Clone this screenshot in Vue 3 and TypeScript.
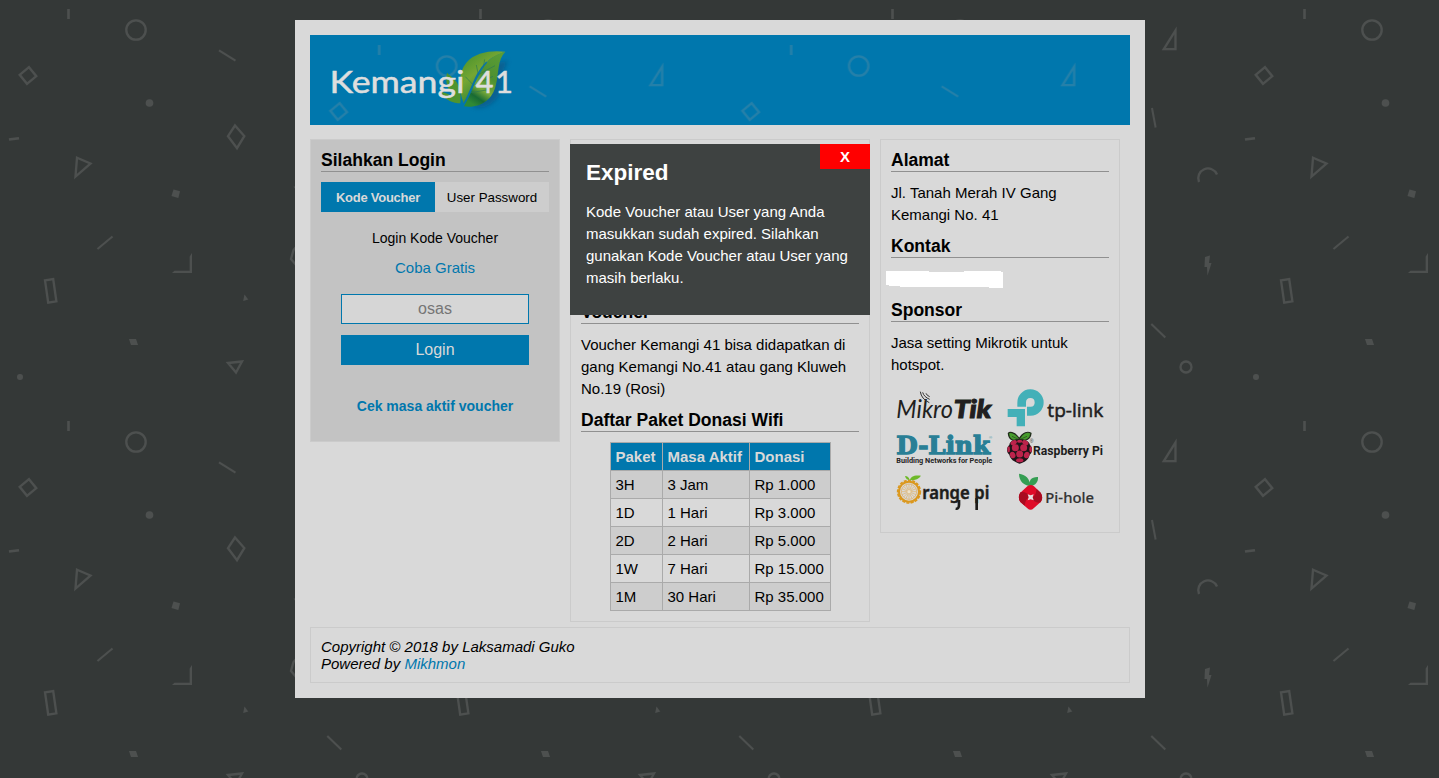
<script setup lang="ts">
import { ref } from 'vue'

interface Donation {
  code: string
  period: string
  price: string
}

const donations: Donation[] = [
  { code: '3H', period: '3 Jam', price: 'Rp 1.000' },
  { code: '1D', period: '1 Hari', price: 'Rp 3.000' },
  { code: '2D', period: '2 Hari', price: 'Rp 5.000' },
  { code: '1W', period: '7 Hari', price: 'Rp 15.000' },
  { code: '1M', period: '30 Hari', price: 'Rp 35.000' },
]

const mode = ref<'voucher' | 'user'>('voucher')
const dialogOpen = ref(true)
</script>

<template>
  <div class="page">
    <svg class="backdrop" aria-hidden="true">
      <defs>
        <g id="confetti" fill="none" stroke="#999" stroke-opacity="0.24" stroke-width="2.3">
          <path d="M68.5 9v10" stroke-width="2.6" />
          <circle cx="136" cy="30" r="9.7" />
          <path d="M219 50.3l16.5 10.4" stroke-width="2" />
          <path d="M29 67.200l7.300 9-9.300 7.600-7.300-9z" />
          <path d="M9 139.500l10-1.300" stroke-width="2.600" />
          <path d="M77 157.700l13.500 5.800-15 13z" />
          <path d="M235 125.500l9.300 10.600-7.300 12-9-12z" />
          <path d="M97.500 249l15-12.500" stroke-width="2" />
          <path d="M45 280.300l8.200-1.300 3.200 22.400-8.200 1.200z" />
          <path d="M228 363l14-1.500-6 11z" />
          <path d="M351.500 30.500v18.700h-11.700z" />
          <path d="M328 108l3.600 19.500" stroke-width="2" />
          <path d="M375 182a9.500 9.500 0 1 1 18-7.500" />
          <path d="M327.300 324l14 13.500" stroke-width="2" />
          <circle cx="362" cy="367" r="5.500" />
          <path d="M298 245l-4.500 5-2.500 9 5 6 8-3 1-11z" />
          <g fill="#999" fill-opacity="0.24" stroke="none">
            <circle cx="149.500" cy="103" r="3.800" />
            <path d="M173.500 189.500l6.500 1.800-1.700 6.700-6.800-1.900z" />
            <path d="M189.700 256.500l2.300-3.500v20h-20l2.500-2.300h15.200z" />
            <path d="M244.500 294.500l3.700 5-5 1.500z" />
            <path d="M129 339h7l2 6h-7z" />
            <circle cx="20" cy="377" r="3" />
            <path d="M381 257l5-1.500-1 7.500h2.500l-4 12.500-.5-8.500h-2.500z" />
            <path d="M293.500 186.500h5l-2 4z" />
          </g>
        </g>
        <pattern id="page-tile" width="412" height="412" patternUnits="userSpaceOnUse">
          <use href="#confetti" />
        </pattern>
      </defs>
      <rect width="100%" height="100%" fill="url(#page-tile)" />
    </svg>

    <main class="sheet">
      <header class="banner">
        <svg viewBox="0 0 820 90" width="820" height="90">
          <defs>
            <pattern id="banner-tile" x="0.7" y="1" width="412" height="412" patternUnits="userSpaceOnUse">
              <use href="#confetti" />
            </pattern>
            <linearGradient id="leaf" x1="0.15" y1="0.2" x2="0.7" y2="1">
              <stop offset="0" stop-color="#56982f" />
              <stop offset="0.3" stop-color="#74a633" />
              <stop offset="0.6" stop-color="#4b9034" />
              <stop offset="0.85" stop-color="#1b6f35" />
              <stop offset="1" stop-color="#3b9437" />
            </linearGradient>
            <linearGradient id="leaf-right" x1="0.8" y1="0" x2="0.3" y2="1">
              <stop offset="0" stop-color="#5a9c35" />
              <stop offset="0.45" stop-color="#4d9031" />
              <stop offset="0.7" stop-color="#78aa39" />
              <stop offset="0.86" stop-color="#186a33" />
              <stop offset="1" stop-color="#2f8935" />
            </linearGradient>
            <filter id="soft" x="-30%" y="-30%" width="160%" height="160%">
              <feGaussianBlur stdDeviation="6" />
            </filter>
          </defs>
          <rect width="820" height="90" fill="url(#banner-tile)" />
          <g transform="scale(0.33333) translate(-45 -45)">
            <path d="M640 122C618 155 625 200 612 225C600 255 560 270 535 262L590 130Z" fill="#075b8b" opacity="0.8" filter="url(#soft)" />
            <path d="M456 158C470 172 486 178 493 205C498 220 497 238 496 250C475 250 452 242 438 216C452 217 466 225 478 234C461 213 448 188 456 158Z" fill="#4f942f" />
            <path d="M506 250C490 207 489 158 514 128C540 96 590 90 631 95C606 104 590 112 580 122C546 155 529 210 506 250Z" fill="url(#leaf)" />
            <path d="M507 259C535 210 544 165 580 122C592 110 608 101 631 95C607 119 612 158 602 197C593 237 557 266 507 259Z" fill="url(#leaf-right)" />
            <path d="M550 164L600 137M535 196L594 169M527 218L586 208M550 164L544 135M535 195L511 170M565 142L569 118" fill="none" stroke="#2c7852" stroke-width="2" />
            <path d="M507 251C530 211 540 160 575 126" fill="none" stroke="#0a73a5" stroke-width="4" />
          </g>
          <g class="wordmark">
            <text x="19.5" y="57.8" font-size="30" textLength="135" lengthAdjust="spacingAndGlyphs">Kemangi</text>
            <text x="165.500 185" y="57.8" font-size="31">41</text>
          </g>
        </svg>
      </header>

      <div class="columns">
        <section class="box login">
          <h3>Silahkan Login</h3>
          <div class="tabs">
            <button :class="{ active: mode === 'voucher' }" @click="mode = 'voucher'">Kode Voucher</button>
            <button :class="{ active: mode === 'user' }" @click="mode = 'user'">User Password</button>
          </div>
          <form @submit.prevent>
            <p class="caption">Login Kode Voucher</p>
            <a class="trial" href="#">Coba Gratis</a>
            <input type="text" placeholder="osas" />
            <button type="submit">Login</button>
          </form>
          <a class="check" href="#">Cek masa aktif voucher</a>
        </section>

        <section class="box info">
          <h3>Voucher</h3>
          <p>Voucher Kemangi 41 bisa didapatkan di gang Kemangi No.41 atau gang Kluweh No.19 (Rosi)</p>
          <h3>Daftar Paket Donasi Wifi</h3>
          <table>
            <thead>
              <tr><th>Paket</th><th>Masa Aktif</th><th>Donasi</th></tr>
            </thead>
            <tbody>
              <tr v-for="d in donations" :key="d.code">
                <td>{{ d.code }}</td><td>{{ d.period }}</td><td>{{ d.price }}</td>
              </tr>
            </tbody>
          </table>

          <div v-if="dialogOpen" class="dialog" role="dialog">
            <button class="close" @click="dialogOpen = false">X</button>
            <h2>Expired</h2>
            <p>Kode Voucher atau User yang Anda masukkan sudah expired. Silahkan gunakan Kode Voucher atau User yang masih berlaku.</p>
          </div>
        </section>

        <section class="box contact">
          <h3>Alamat</h3>
          <p>Jl. Tanah Merah IV Gang Kemangi No. 41</p>
          <h3>Kontak</h3>
          <div class="phone">
            <svg width="117" height="17" viewBox="0 0 117 17">
              <path d="M0 0H43V1H78V0H115V1H117V17H103V16H14V15H3V14H0Z" fill="#fff" />
            </svg>
          </div>
          <h3>Sponsor</h3>
          <p>Jasa setting Mikrotik untuk hotspot.</p>
          <svg class="sponsors" width="218" height="136" viewBox="33 18 654 408">
            <!-- MikroTik -->
            <g fill="#211f20">
              <text x="49" y="113" font-family="Lato" font-weight="400" font-style="italic" font-size="77" textLength="170" lengthAdjust="spacingAndGlyphs">Mikro</text>
              <text x="221" y="113" font-family="Lato" font-weight="900" font-style="italic" font-size="74" textLength="113" lengthAdjust="spacingAndGlyphs" stroke="#211f20" stroke-width="3">Tik</text>
            </g>
            <path d="M121 35Q124 57 148 68M128 37Q132 51 149 58M138 40Q141 47 149 50" fill="none" stroke="#333" stroke-width="3" />
            <!-- tp-link -->
            <g fill="#43b0b8">
              <path d="M412 80V69A39.500 39.500 0 1 1 452 107H441V80H452A13 13 0 1 0 438 67V80Z" />
              <path d="M383 87H435V139H410V111H383Z" />
            </g>
            <text x="502" y="110" fill="#202020" stroke="#202020" stroke-width="1.500" font-family="Open Sans" font-weight="500" font-size="55" textLength="168" lengthAdjust="spacingAndGlyphs">tp-link</text>
            <!-- D-Link -->
            <text x="49" y="223" fill="#297f96" stroke="#297f96" stroke-width="4" font-family="DejaVu Serif" font-weight="700" font-size="73" textLength="281" lengthAdjust="spacingAndGlyphs">D-Link</text>
            <text x="327" y="177" fill="#4b91a2" font-family="Liberation Sans" font-size="13">®</text>
            <text x="49" y="248" fill="#252525" font-family="Roboto" font-weight="700" font-size="22.5" textLength="288" lengthAdjust="spacingAndGlyphs">Building Networks for People</text>
            <!-- Raspberry Pi -->
            <path d="M418 176C402 152 387 157 385 160C387 178 397 184 418 181C439 185 451 176 453 160C444 153 428 157 418 176Z" fill="#479c2d" stroke="#202b1b" stroke-width="3.500" />
            <path d="M418 179L396 169M418 179L441 169" stroke="#25421e" stroke-width="2" />
            <path d="M418 178C402 176 389 184 388 195C378 204 380 218 388 224C391 240 406 246 418 251C433 247 446 240 449 224C458 217 459 203 450 195C448 184 434 176 418 178Z" fill="#1d1518" />
            <g fill="#bc234b">
              <ellipse cx="401" cy="188" rx="10" ry="7" transform="rotate(-30 401 188)" />
              <ellipse cx="436" cy="188" rx="10" ry="7" transform="rotate(30 436 188)" />
              <ellipse cx="419" cy="184" rx="8" ry="4.500" />
              <circle cx="406" cy="203" r="10.500" />
              <circle cx="431" cy="203" r="10.500" />
              <ellipse cx="386" cy="208" rx="4" ry="9" />
              <ellipse cx="452" cy="208" rx="4" ry="9" />
              <circle cx="419" cy="222" r="10.500" />
              <ellipse cx="398" cy="225" rx="8" ry="10" transform="rotate(-25 398 225)" />
              <ellipse cx="440" cy="225" rx="8" ry="10" transform="rotate(25 440 225)" />
              <ellipse cx="419" cy="241" rx="11" ry="6" />
            </g>
            <text x="449" y="190" fill="#333" font-family="Liberation Sans" font-size="15">®</text>
            <text x="459" y="224" fill="#1d1d1d" font-family="Roboto" font-weight="700" font-size="36" textLength="210" lengthAdjust="spacingAndGlyphs">Raspberry Pi</text>
            <!-- Orange Pi -->
            <g fill="none" stroke="#db981e">
              <circle cx="87" cy="335" r="30" stroke-width="6" />
              <circle cx="87" cy="335" r="34" stroke-width="5" stroke-dasharray="9 4" />
              <circle cx="87" cy="335" r="23" stroke="#dfa95b" stroke-width="2" />
              <path d="M87 312V358M64 335H110M71 319L103 351M71 351L103 319M78 314L96 356M66 326L108 344M66 344L108 326M78 356L96 314" stroke="#dfb879" stroke-width="2.500" />
            </g>
            <circle cx="87" cy="335" r="5" fill="#eee3cd" />
            <path d="M90 301C91 289 104 284 123 287C117 296 104 302 90 301ZM75 288Q86 288 89 300Q78 300 75 288" fill="#6db928" />
            <g fill="#1d1d1b" stroke="#1d1d1b" stroke-width="1.500" font-family="Noto Sans" font-weight="600">
              <text x="127" y="357" font-size="53" textLength="142" lengthAdjust="spacingAndGlyphs">range</text>
              <text x="283" y="357" font-size="53" textLength="45" lengthAdjust="spacingAndGlyphs">pi</text>
            </g>
            <path d="M237 360V374Q237 388 227 386M290 354V390" fill="none" stroke="#1d1d1b" stroke-width="8" />
            <!-- Pi-hole -->
            <path d="M451 318C433 317 417 304 417 281C436 284 450 294 451 318ZM452 318C444 302 454 290 474 291C475 306 467 316 452 318Z" fill="#359e53" />
            <path d="M442 319Q452 311 462 319L482 338Q491 352 482 366L461 385Q452 394 442 385L421 366Q412 352 421 338Z" fill="#df0b28" />
            <path d="M421 337Q438 333 452 352Q438 349 434 377L421 366Q412 352 421 337ZM482 367Q466 372 452 352Q466 355 470 327L482 338Q491 352 482 367Z" fill="#a90b20" />
            <path d="M443 343L452 346L461 343L458 352L461 361L452 358L443 361L446 352Z" fill="#e7dddd" />
            <text x="496" y="370" fill="#333" stroke="#333" stroke-width="0.500" font-family="Noto Sans" font-weight="500" font-size="43" textLength="146" lengthAdjust="spacingAndGlyphs">Pi-hole</text>
          </svg>
        </section>
      </div>

      <footer class="box footer">
        Copyright © 2018 by Laksamadi Guko<br />Powered by <a href="#">Mikhmon</a>
      </footer>
    </main>
  </div>
</template>

<style>
body {
  margin: 0;
  background: #343837;
}
</style>

<style scoped>
.page {
  position: relative;
  box-sizing: border-box;
  height: 778px;
  padding: 20px 294px 0 295px;
  overflow: hidden;
  background: #343837;
  color: #000;
  font: 15px/22px "Liberation Sans", Arial, sans-serif;
}
.page * { box-sizing: border-box; }
.backdrop {
  position: absolute;
  inset: 0;
  width: 100%;
  height: 100%;
}
.sheet {
  position: relative;
  width: 850px;
  height: 678px;
  padding: 15px;
  background: #d9d9d9;
}
.banner {
  height: 90px;
  margin-bottom: 14px;
  background: #0077ad;
}
.banner svg { display: block; }
.wordmark {
  fill: #dedede;
  stroke: #dedede;
  stroke-width: 0.5px;
  font-family: Lato, sans-serif;
}
.columns {
  display: flex;
  align-items: flex-start;
  gap: 10px;
  height: 488px;
}
.box {
  padding: 10px;
  border: 1px solid #cbcbcb;
}
h3 {
  height: 22px;
  margin: 0 0 10px;
  border-bottom: 1px solid #909090;
  font-size: 17.55px;
  line-height: 20px;
}
p { margin: 0 0 10px; }
a {
  color: #0077ad;
  text-decoration: none;
}
button {
  padding: 0;
  border: 0;
  font-family: inherit;
  cursor: pointer;
}
.login {
  width: 250px;
  height: 303px;
  background: #c3c3c3;
  text-align: center;
}
.login h3 { text-align: left; }
.tabs { display: flex; }
.tabs button {
  flex: 1;
  height: 30px;
  background: #cdcdcd;
  color: #000;
  font-size: 13.33px;
}
.tabs .active {
  background: #0077ad;
  color: #d9d9d9;
  font-size: 13px;
  font-weight: bold;
  letter-spacing: -0.25px;
}
form {
  display: flex;
  flex-direction: column;
  padding: 15px 20px 0;
}
.caption {
  margin-bottom: 8px;
  font-size: 14px;
}
.trial { margin-bottom: 15px; }
form input {
  width: 100%;
  height: 30px;
  margin: 0 0 11px;
  padding: 0;
  border: 1px solid #0077ad;
  background: #d6d6d6;
  font: 16px "Liberation Sans", Arial, sans-serif;
  text-align: center;
}
form input::placeholder { color: #757575; }
form button {
  height: 30px;
  background: #0077ad;
  color: #d9d9d9;
  font-size: 16px;
}
.check {
  display: block;
  margin-top: 30px;
  font-size: 14px;
  font-weight: bold;
}
.info {
  position: relative;
  width: 300px;
  height: 483px;
  padding-top: 162px;
}
table {
  margin: 0 auto;
  border-collapse: collapse;
}
th, td {
  height: 28px;
  padding: 0 4px 0 5px;
  border: 1px solid #aaa;
  text-align: left;
}
th:first-child { width: 52px; }
th:nth-child(2) { width: 87px; }
th:last-child { width: 81px; }
th {
  background: #0077ad;
  color: #d9d9d9;
}
tbody tr:nth-child(odd) { background: #cdcdcd; }
.dialog {
  position: absolute;
  top: 4px;
  left: -1px;
  width: 300px;
  height: 171px;
  padding: 16px;
  background: #3e4241;
  color: #fff;
}
.dialog h2 {
  margin: 0 0 16px;
  font-size: 22.5px;
  line-height: 25px;
}
.dialog p { margin-right: -4px; }
.close {
  position: absolute;
  top: 0;
  right: 0;
  width: 50px;
  height: 25px;
  background: #f00;
  color: #fff;
  font-size: 15px;
  font-weight: bold;
}
.contact {
  width: 240px;
  height: 394px;
}
.phone {
  height: 22px;
  margin: 0 0 10px -5px;
  padding-top: 3px;
}
.phone svg, .sponsors { display: block; }
.footer {
  height: 56px;
  font-style: italic;
  line-height: 17px;
}
</style>
